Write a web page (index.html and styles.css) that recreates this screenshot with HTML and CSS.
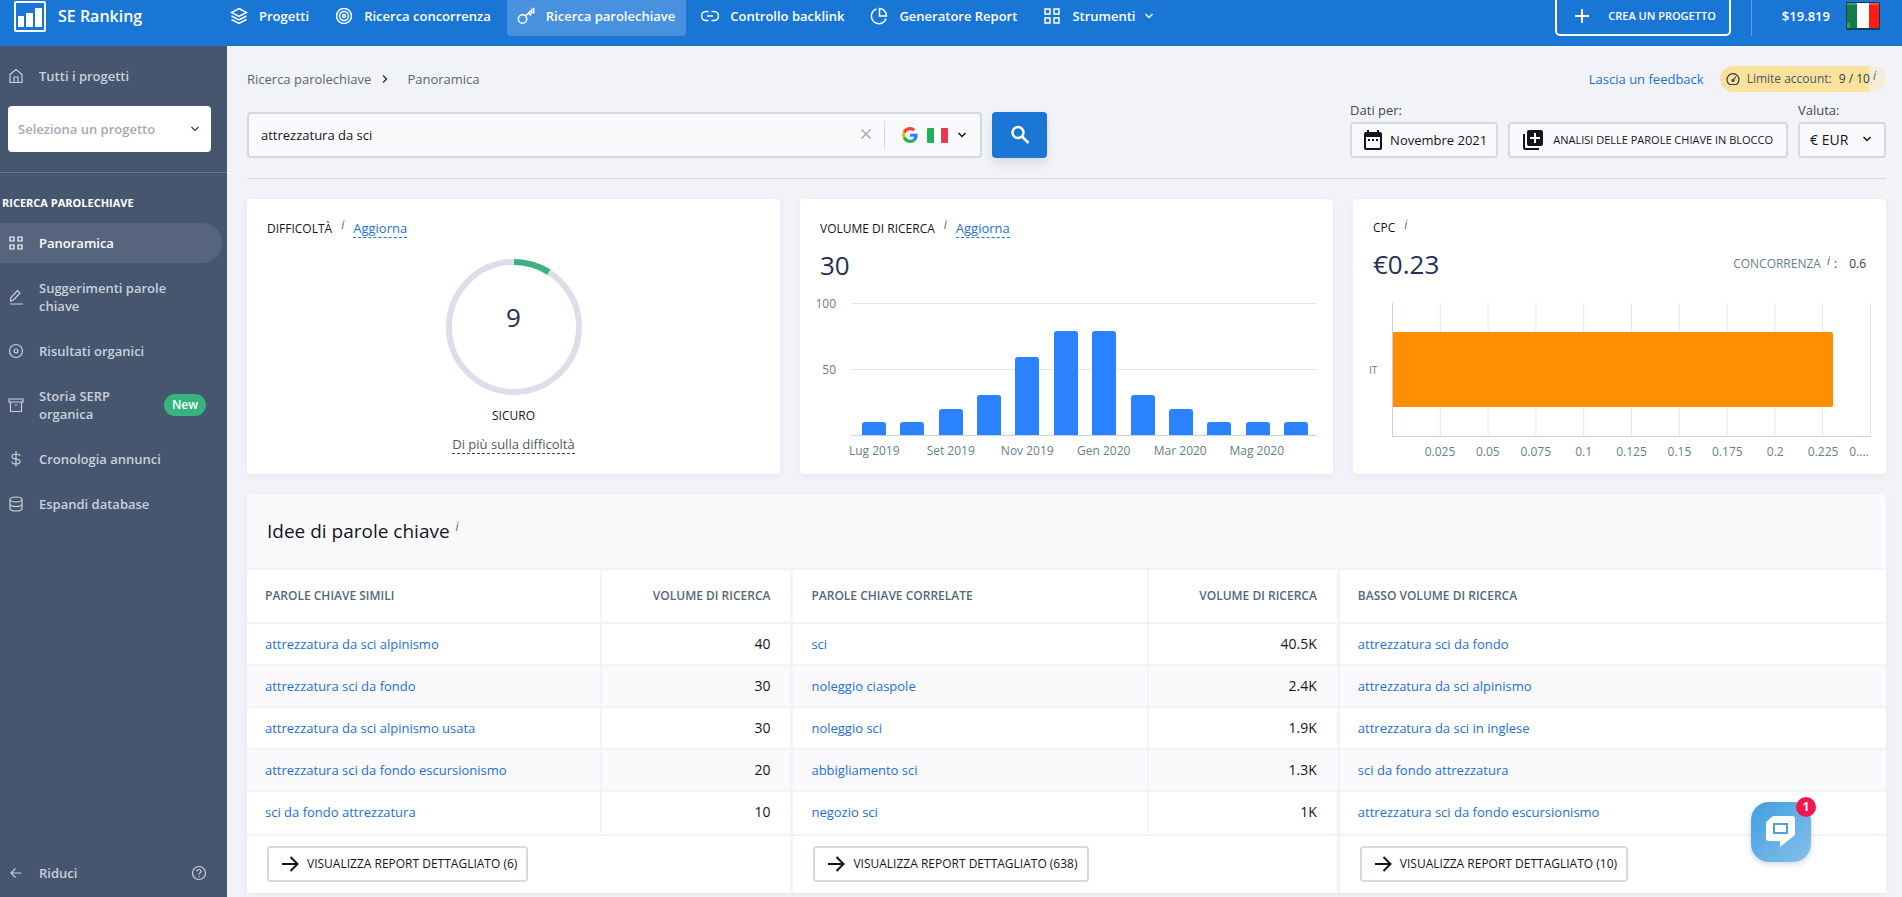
FILE: index.html
```
<!DOCTYPE html>
<html lang="it">
<head>
  <meta charset="utf-8">
  <title>SE Ranking - Panoramica</title>
  <link rel="stylesheet" href="styles.css">
</head>
<body>
  <header class="header">
    <a class="logo" href="#">
      <svg class="logo__icon" width="32" height="31" viewBox="0 0 32 31">
        <rect x="1" y="1" width="30" height="29" rx="1" fill="none" stroke="#fff" stroke-width="2"/>
        <path d="M4 15h6v11H4zM12 12h7v14h-7zM21 7h7v19h-7z" fill="#fff"/>
      </svg>
      SE Ranking
    </a>

    <nav class="menu">
      <a class="menu__item" href="#">
        <svg class="icon" width="18" height="18" viewBox="0 0 18 18"><path d="M9 1.500L16.500 5.500 9 9.500 1.500 5.500zM1.500 9L9 13l7.500-4M1.500 12.500L9 16.500l7.500-4"/></svg>
        Progetti
      </a>
      <a class="menu__item" href="#">
        <svg class="icon" width="18" height="18" viewBox="0 0 18 18"><circle cx="9" cy="9" r="7.500"/><circle cx="9" cy="9" r="4.500"/><circle cx="9" cy="9" r="1.500"/></svg>
        Ricerca concorrenza
      </a>
      <a class="menu__item menu__item--active" href="#">
        <svg class="icon" width="18" height="18" viewBox="0 0 18 18"><circle cx="5.500" cy="12" r="4.200"/><path d="M8.500 9L15.500 2M11.500 6.200l1.800 1.800 1.500-3.200 1.900 1V1.500h-1"/></svg>
        Ricerca parolechiave
      </a>
      <a class="menu__item" href="#">
        <svg class="icon" width="18" height="18" viewBox="0 0 18 18"><path d="M7.500 4.500H5a4.500 4.500 0 0 0 0 9h2.500M10.500 4.500H13a4.500 4.500 0 0 1 0 9h-2.500M6 9h6"/></svg>
        Controllo backlink
      </a>
      <a class="menu__item" href="#">
        <svg class="icon" width="18" height="18" viewBox="0 0 18 18"><path d="M6.500 2A7.500 7.500 0 1 0 16 11.500M9.500 1.500v7.500h7A7.500 7.500 0 0 0 9.500 1.500z"/></svg>
        Generatore Report
      </a>
      <a class="menu__item" href="#">
        <svg class="icon" width="18" height="18" viewBox="0 0 18 18"><path d="M2 2h5v5H2zM11 2h5v5h-5zM2 11h5v5H2zM11 11h5v5h-5z"/></svg>
        Strumenti
        <svg class="icon menu__arrow" width="10" height="10" viewBox="0 0 10 10"><path d="M1.500 3L5 6.500 8.500 3"/></svg>
      </a>
    </nav>

    <button class="create" type="button">
      <svg class="icon" width="16" height="16" viewBox="0 0 16 16"><path d="M8 1v14M1 8h14"/></svg>
      CREA UN PROGETTO
    </button>
    <div class="balance">$19.819</div>
    <a class="lang" href="#" aria-label="Italiano">
      <svg width="34" height="28" viewBox="0 0 34 28">
        <rect width="34" height="28" rx="1" fill="#0c3f55"/>
        <path d="M1 1h11v25H1z" fill="#128046"/>
        <path d="M11 1h12v25H11z" fill="#fff"/>
        <path d="M23 1h10v25H23z" fill="#ff1c16"/>
        <path d="M1 1h10v2H1zM23 1h10v2H23zM1 21h3v5H1z" fill="#fff" opacity=".2"/>
      </svg>
    </a>
  </header>

  <div class="layout">
    <aside class="sidebar">
      <a class="side-link" href="#">
        <svg class="icon" width="16" height="16" viewBox="0 0 16 16"><path d="M2 6.500L8 1.500l6 5v8H2zM6 14.500V9h4v5.500"/></svg>
        Tutti i progetti
      </a>
      <div class="project">
        <select class="project__select" aria-label="Progetto">
          <option>Seleziona un progetto</option>
        </select>
        <svg class="icon project__arrow" width="10" height="10" viewBox="0 0 10 10"><path d="M1.500 3L5 6.500 8.500 3"/></svg>
      </div>

      <h2 class="sidebar__title">RICERCA PAROLECHIAVE</h2>
      <nav class="side-menu">
        <a class="side-link side-link--active" href="#">
          <svg class="icon" width="16" height="16" viewBox="0 0 16 16"><path d="M2 2h4v4H2zM10 2h4v4h-4zM2 10h4v4H2zM10 10h4v4h-4z"/></svg>
          Panoramica
        </a>
        <a class="side-link" href="#">
          <svg class="icon" width="16" height="16" viewBox="0 0 16 16"><path d="M2 15h13M3 8.500L9.500 1.500l2.500 2.500-6.500 7L2.500 12z"/></svg>
          <span>Suggerimenti parole<br>chiave</span>
        </a>
        <a class="side-link" href="#">
          <svg class="icon" width="16" height="16" viewBox="0 0 16 16"><circle cx="8" cy="8" r="6.500"/><circle cx="8" cy="8" r="2"/></svg>
          Risultati organici
        </a>
        <a class="side-link" href="#">
          <svg class="icon" width="16" height="16" viewBox="0 0 16 16"><path d="M1 2h14v3H1zM2.500 5v9.500h11V5M6.500 8h3"/></svg>
          <span>Storia SERP<br>organica</span>
          <span class="new">New</span>
        </a>
        <a class="side-link" href="#">
          <svg class="icon" width="16" height="16" viewBox="0 0 16 16"><path d="M8 0.500v15M12 5c0-1.500-1.500-2-4-2s-4 .5-4 2.500S5.500 8 8 8s4 .8 4 2.500-1.500 2.500-4 2.500-4-.7-4-2.500"/></svg>
          Cronologia annunci
        </a>
        <a class="side-link" href="#">
          <svg class="icon" width="16" height="16" viewBox="0 0 16 16"><ellipse cx="8" cy="3.500" rx="6" ry="2.500"/><path d="M2 3.500v9c0 1.400 2.700 2.500 6 2.500s6-1.100 6-2.500v-9M2 8c0 1.400 2.700 2.500 6 2.500s6-1.100 6-2.500"/></svg>
          Espandi database
        </a>
      </nav>

      <div class="sidebar__bottom">
        <a class="side-link" href="#">
          <svg class="icon" width="16" height="16" viewBox="0 0 16 16"><path d="M13 8H3M7.500 3.500L3 8l4.500 4.500"/></svg>
          Riduci
        </a>
        <a class="help" href="#" aria-label="Aiuto">
          <svg class="icon" width="16" height="16" viewBox="0 0 16 16"><circle cx="8" cy="8" r="6.500"/><path d="M6 6.500c0-2.700 4-2.700 4 0C10 8 8 8 8 9.500M8 11v1.200"/></svg>
        </a>
      </div>
    </aside>

    <main class="main">
      <div class="topline">
        <a class="topline__crumb" href="#">Ricerca parolechiave</a>
        <svg class="icon topline__arrow" width="8" height="10" viewBox="0 0 8 10"><path d="M2 1.500L5.500 5 2 8.500"/></svg>
        <span class="topline__crumb">Panoramica</span>
        <a class="topline__feedback" href="#">Lascia un feedback</a>
        <div class="limit">
          <svg class="icon" width="14" height="14" viewBox="0 0 14 14"><path d="M3.500 12.500a6 6 0 1 1 7 0zM7 8.500l3-4"/><circle cx="7" cy="8.500" r="1"/></svg>
          Limite account:
          <b class="limit__value">9 / 10</b>
          <i class="info">i</i>
        </div>
      </div>

      <form class="search">
        <div class="search__box">
          <input class="search__input" type="text" value="attrezzatura da sci" aria-label="Parola chiave">
          <button class="search__clear" type="reset" aria-label="Cancella">
            <svg class="icon" width="12" height="12" viewBox="0 0 12 12"><path d="M1.500 1.500l9 9M10.500 1.500l-9 9"/></svg>
          </button>
          <button class="search__engine" type="button" aria-label="Google Italia">
            <svg width="16" height="16" viewBox="0 0 48 48">
              <path fill="#ff4131" d="M24 9.500c3.500 0 6.700 1.200 9.200 3.600l6.900-6.900C35.900 2.400 30.500 0 24 0 14.600 0 6.500 5.400 2.600 13.200l8 6.200C12.400 13.700 17.700 9.500 24 9.500z"/>
              <path fill="#2d7ff9" d="M47 24.600c0-1.600-.2-3.100-.4-4.600H24v9h12.900c-.6 3-2.300 5.500-4.800 7.200l7.700 6C44.400 38 47 31.900 47 24.600z"/>
              <path fill="#fbb90c" d="M10.500 28.600a14.500 14.500 0 0 1 0-9.200l-8-6.200a24 24 0 0 0 0 21.600z"/>
              <path fill="#1eb158" d="M24 48c6.500 0 11.900-2.100 15.900-5.800l-7.700-6c-2.200 1.500-4.900 2.300-8.200 2.300-6.300 0-11.600-4.200-13.500-9.900l-8 6.200C6.500 42.600 14.600 48 24 48z"/>
            </svg>
            <svg width="21" height="15" viewBox="0 0 21 15"><rect width="21" height="15" rx="1" fill="#fff"/><path d="M1 0h6v15H1a1 1 0 0 1-1-1V1a1 1 0 0 1 1-1z" fill="#1eb158"/><path d="M14 0h6a1 1 0 0 1 1 1v13a1 1 0 0 1-1 1h-6z" fill="#e9374b"/></svg>
            <svg class="icon" width="10" height="10" viewBox="0 0 10 10"><path d="M1.500 3L5 6.500 8.500 3"/></svg>
          </button>
        </div>
        <button class="search__submit" type="submit" aria-label="Cerca">
          <svg class="icon" width="20" height="20" viewBox="0 0 20 20"><circle cx="8" cy="7.500" r="5.500"/><path d="M12 11.500l6.500 6.500"/></svg>
        </button>

        <div class="filters">
          <div class="field">
            <span class="field__label">Dati per:</span>
            <button class="button button--date" type="button">
              <svg width="18" height="20" viewBox="0 0 18 20"><path d="M2 2h1V0h2v2h8V0h2v2h1a2 2 0 0 1 2 2v14a2 2 0 0 1-2 2H2a2 2 0 0 1-2-2V4a2 2 0 0 1 2-2zM2 7v11h14V7z" fill="#14141f" fill-rule="evenodd"/><path d="M4 9h2v2H4zM8 9h2v2H8zM12 9h2v2h-2z" fill="#14141f"/></svg>
              Novembre 2021
            </button>
          </div>
          <button class="button button--bulk" type="button">
            <svg width="20" height="20" viewBox="0 0 20 20"><path d="M6 0h12a2 2 0 0 1 2 2v12a2 2 0 0 1-2 2H6a2 2 0 0 1-2-2V2a2 2 0 0 1 2-2zM0 4h2v14h14v2H2a2 2 0 0 1-2-2z" fill="#14141f"/><path d="M11 3h2v4h4v2h-4v4h-2V9H7V7h4z" fill="#fff"/></svg>
            ANALISI DELLE PAROLE CHIAVE IN BLOCCO
          </button>
          <div class="field">
            <label class="field__label" for="currency">Valuta:</label>
            <div class="currency">
              <select class="currency__select" id="currency">
                <option>€ EUR</option>
              </select>
              <svg class="icon currency__arrow" width="10" height="10" viewBox="0 0 10 10"><path d="M1.500 3L5 6.500 8.500 3"/></svg>
            </div>
          </div>
        </div>
      </form>

      <section class="cards">
        <article class="card">
          <div class="card__head">
            <h3 class="card__title">DIFFICOLTÀ</h3>
            <i class="info">i</i>
            <a class="card__update" href="#">Aggiorna</a>
          </div>
          <div class="difficulty">
            <div class="gauge">
              <svg class="gauge__ring" width="136" height="136" viewBox="0 0 136 136">
                <circle cx="68" cy="68" r="65" stroke="#dcdee8"/>
                <circle cx="68" cy="68" r="65" stroke="#3bb27d" pathLength="100" stroke-dasharray="9 91" transform="rotate(-90 68 68)"/>
              </svg>
              <strong class="gauge__value">9</strong>
            </div>
            <span class="difficulty__level">SICURO</span>
            <a class="difficulty__more" href="#">Di più sulla difficoltà</a>
          </div>
        </article>

        <article class="card">
          <div class="card__head">
            <h3 class="card__title">VOLUME DI RICERCA</h3>
            <i class="info">i</i>
            <a class="card__update" href="#">Aggiorna</a>
          </div>
          <div class="card__row">
            <strong class="card__number">30</strong>
          </div>
          <div class="volume">
            <div class="volume__scale">
              <span>100</span>
              <span>50</span>
            </div>
            <div class="volume__plot">
              <div class="volume__bar" style="height: 10%"></div>
              <div class="volume__bar" style="height: 10%"></div>
              <div class="volume__bar" style="height: 20%"></div>
              <div class="volume__bar" style="height: 30%"></div>
              <div class="volume__bar" style="height: 59%"></div>
              <div class="volume__bar" style="height: 79%"></div>
              <div class="volume__bar" style="height: 79%"></div>
              <div class="volume__bar" style="height: 30%"></div>
              <div class="volume__bar" style="height: 20%"></div>
              <div class="volume__bar" style="height: 10%"></div>
              <div class="volume__bar" style="height: 10%"></div>
              <div class="volume__bar" style="height: 10%"></div>
            </div>
            <div class="volume__months">
              <span>Lug 2019</span>
              <span>Set 2019</span>
              <span>Nov 2019</span>
              <span>Gen 2020</span>
              <span>Mar 2020</span>
              <span>Mag 2020</span>
            </div>
          </div>
        </article>

        <article class="card">
          <div class="card__head">
            <h3 class="card__title">CPC</h3>
            <i class="info">i</i>
          </div>
          <div class="card__row">
            <strong class="card__number">€0.23</strong>
            <div class="competition">CONCORRENZA <i class="info">i</i><b class="competition__colon">:</b><b>0.6</b></div>
          </div>
          <div class="cpc">
            <span class="cpc__country">IT</span>
            <div class="cpc__plot">
              <div class="cpc__bar" style="width: 92%"></div>
            </div>
            <div class="cpc__scale">
              <span>0.025</span>
              <span>0.05</span>
              <span>0.075</span>
              <span>0.1</span>
              <span>0.125</span>
              <span>0.15</span>
              <span>0.175</span>
              <span>0.2</span>
              <span>0.225</span>
              <span>0....</span>
            </div>
          </div>
        </article>
      </section>

      <section class="ideas">
        <h2 class="ideas__title">Idee di parole chiave <i class="info">i</i></h2>
        <div class="ideas__columns">
          <div class="ideas__column">
            <table class="table">
              <thead>
                <tr><th>PAROLE CHIAVE SIMILI</th><th class="table__volume">VOLUME DI RICERCA</th></tr>
              </thead>
              <tbody>
                <tr><td><a href="#">attrezzatura da sci alpinismo</a></td><td class="table__volume">40</td></tr>
                <tr><td><a href="#">attrezzatura sci da fondo</a></td><td class="table__volume">30</td></tr>
                <tr><td><a href="#">attrezzatura da sci alpinismo usata</a></td><td class="table__volume">30</td></tr>
                <tr><td><a href="#">attrezzatura sci da fondo escursionismo</a></td><td class="table__volume">20</td></tr>
                <tr><td><a href="#">sci da fondo attrezzatura</a></td><td class="table__volume">10</td></tr>
              </tbody>
            </table>
            <div class="ideas__footer">
              <button class="button button--report" type="button">
                <svg class="icon" width="18" height="18" viewBox="0 0 18 18"><path d="M1 9h15M9.500 2L16.500 9l-7 7"/></svg>
                VISUALIZZA REPORT DETTAGLIATO (6)
              </button>
            </div>
          </div>

          <div class="ideas__column">
            <table class="table">
              <thead>
                <tr><th>PAROLE CHIAVE CORRELATE</th><th class="table__volume">VOLUME DI RICERCA</th></tr>
              </thead>
              <tbody>
                <tr><td><a href="#">sci</a></td><td class="table__volume">40.5K</td></tr>
                <tr><td><a href="#">noleggio ciaspole</a></td><td class="table__volume">2.4K</td></tr>
                <tr><td><a href="#">noleggio sci</a></td><td class="table__volume">1.9K</td></tr>
                <tr><td><a href="#">abbigliamento sci</a></td><td class="table__volume">1.3K</td></tr>
                <tr><td><a href="#">negozio sci</a></td><td class="table__volume">1K</td></tr>
              </tbody>
            </table>
            <div class="ideas__footer">
              <button class="button button--report" type="button">
                <svg class="icon" width="18" height="18" viewBox="0 0 18 18"><path d="M1 9h15M9.500 2L16.500 9l-7 7"/></svg>
                VISUALIZZA REPORT DETTAGLIATO (638)
              </button>
            </div>
          </div>

          <div class="ideas__column">
            <table class="table">
              <thead>
                <tr><th>BASSO VOLUME DI RICERCA</th></tr>
              </thead>
              <tbody>
                <tr><td><a href="#">attrezzatura sci da fondo</a></td></tr>
                <tr><td><a href="#">attrezzatura da sci alpinismo</a></td></tr>
                <tr><td><a href="#">attrezzatura da sci in inglese</a></td></tr>
                <tr><td><a href="#">sci da fondo attrezzatura</a></td></tr>
                <tr><td><a href="#">attrezzatura sci da fondo escursionismo</a></td></tr>
              </tbody>
            </table>
            <div class="ideas__footer">
              <button class="button button--report" type="button">
                <svg class="icon" width="18" height="18" viewBox="0 0 18 18"><path d="M1 9h15M9.500 2L16.500 9l-7 7"/></svg>
                VISUALIZZA REPORT DETTAGLIATO (10)
              </button>
            </div>
          </div>
        </div>
      </section>
    </main>
  </div>

  <button class="chat" type="button" aria-label="Chat">
    <svg width="30" height="32" viewBox="0 0 30 32">
      <path d="M7 0h19a3 3 0 0 1 3 3v16L14 31v-6H3a3 3 0 0 1-3-3V6z" fill="#fff"/>
      <path d="M8 8h13v9H8z" fill="#fff" stroke="#4f9fd8" stroke-width="2"/>
    </svg>
    <span class="chat__badge">1</span>
  </button>
</body>
</html>
```
FILE: styles.css
```
* {
  box-sizing: border-box;
}

body {
  display: flex;
  flex-direction: column;
  min-height: 100vh;
  margin: 0;
  background-color: #f2f3f8;
  color: #14141f;
  font-family: "Open Sans", "Noto Sans", sans-serif;
  font-size: 13px;
  line-height: 18px;
}

a {
  color: #1d6fd6;
  text-decoration: none;
}

button,
input,
select {
  margin: 0;
  font: inherit;
  color: inherit;
}

button {
  cursor: pointer;
}

select {
  appearance: none;
}

.icon {
  flex: none;
  fill: none;
  stroke: currentColor;
  stroke-width: 1.5;
}

.info {
  align-self: flex-start;
  color: #4d6a7a;
  font-size: 12px;
  line-height: 12px;
}

/* header */

.header {
  display: flex;
  flex: none;
  align-items: center;
  height: 46px;
  padding: 0 22px 14px 14px;
  background-color: #1976d5;
  color: #fff;
}

.logo {
  display: flex;
  gap: 12px;
  align-items: center;
  width: 206px;
  color: #fff;
  font-size: 16px;
  font-weight: 600;
}

.menu {
  display: flex;
  flex: 1;
  gap: 5px;
}

.menu__item {
  display: flex;
  gap: 11px;
  align-items: center;
  height: 40px;
  padding: 0 11px 0 10px;
  border-radius: 4px;
  color: #fff;
  font-weight: 600;
}

.menu__item--active {
  background-color: #4791de;
}

.menu__arrow {
  margin-left: -2px;
}

.create {
  display: flex;
  gap: 18px;
  align-items: center;
  height: 40px;
  margin-right: 20px;
  padding: 0 13px 0 17px;
  border: 2px solid #fff;
  border-radius: 5px;
  background: none;
  font-size: 11px;
  font-weight: 600;
}

.create .icon,
.button--report .icon {
  stroke-width: 2;
}

.balance {
  height: 40px;
  padding: 0 16px 0 30px;
  border-left: 1px solid #5b9fe3;
  font-weight: 600;
  line-height: 40px;
}

.lang {
  display: flex;
}

/* sidebar */

.layout {
  display: flex;
  flex: 1;
}

.sidebar {
  display: flex;
  flex: none;
  flex-direction: column;
  width: 227px;
  padding: 10px 0 4px;
  background-color: #46566f;
}

.side-link {
  display: flex;
  gap: 15px;
  align-items: center;
  margin-right: 5px;
  padding: 11px 16px 11px 8px;
  border-radius: 0 20px 20px 0;
  color: #c9d0da;
  font-weight: 600;
}

.side-link--active {
  background-color: #56657d;
  color: #fff;
}

.sidebar .icon {
  stroke-width: 1.2;
}

.new {
  margin-left: auto;
  padding: 2px 8px;
  border-radius: 11px;
  background-color: #36b37e;
  color: #fff;
  font-size: 12px;
}

.project {
  position: relative;
  padding: 10px 16px 20px 8px;
  border-bottom: 1px solid #65748b;
}

.project__select {
  width: 100%;
  height: 46px;
  padding: 0 10px;
  border: 0;
  border-radius: 4px;
  background-color: #fff;
  color: #a3a9b8;
  font-weight: 600;
}

.project__arrow {
  position: absolute;
  top: 28px;
  right: 27px;
  color: #333a4d;
}

.sidebar__title {
  margin: 21px 0 11px 2px;
  color: #fff;
  font-size: 11px;
  font-weight: 700;
}

.side-menu {
  display: flex;
  flex-direction: column;
  gap: 5px;
}

.sidebar__bottom {
  display: flex;
  align-items: center;
  justify-content: space-between;
  margin-top: auto;
}

.help {
  display: flex;
  margin-right: 20px;
  color: #c9d0da;
}

/* main */

.main {
  flex: 1;
  min-width: 0;
  padding: 20px 16px 4px 20px;
}

.topline {
  display: flex;
  align-items: center;
}

.topline__crumb {
  color: #566776;
}

.topline__arrow {
  margin: 0 18px 0 10px;
  color: #333a4d;
}

.topline__feedback {
  margin: 0 16px 0 auto;
}

.limit {
  display: flex;
  gap: 7px;
  align-items: center;
  height: 26px;
  padding: 4px 10px 4px 6px;
  border-radius: 13px;
  background: linear-gradient(to right, #fae29d 90%, #f6ecd8 90%);
  color: #4f5663;
  font-size: 12px;
}

.limit .icon {
  color: #333a4d;
  stroke-width: 1.2;
}

.limit__value {
  color: #333a4d;
  font-weight: 500;
}

.limit .info {
  margin-left: -4px;
}

.search {
  display: flex;
  gap: 10px;
  align-items: flex-end;
  margin-bottom: 20px;
  padding: 9px 0 20px;
  border-bottom: 1px solid #d5d7e4;
}

.search__box {
  display: flex;
  width: 735px;
  height: 46px;
  border: 2px solid #d5d7e4;
  border-radius: 4px;
  background-color: #fafafd;
}

.search__input {
  flex: 1;
  min-width: 0;
  padding: 0 12px;
  border: 0;
  background: none;
}

.search__clear {
  padding: 0 8px;
  border: 0;
  background: none;
  color: #a3a9b8;
}

.search__engine {
  display: flex;
  gap: 9px;
  align-items: center;
  margin: 7px 4px;
  padding: 0 9px 0 17px;
  border: 0;
  border-left: 1px solid #d5d7e4;
  background: none;
}

.search__submit {
  display: flex;
  align-items: center;
  justify-content: center;
  width: 55px;
  height: 46px;
  border: 0;
  border-radius: 4px;
  background-color: #1976d5;
  box-shadow: 0 5px 10px #d9dbe3;
  color: #fff;
}

.search__submit .icon {
  stroke-width: 2.5;
}

.filters {
  display: flex;
  gap: 10px;
  align-items: flex-end;
  margin-left: auto;
}

.field {
  display: flex;
  flex-direction: column;
  gap: 3px;
}

.field__label {
  color: #3d4a57;
}

.button {
  display: flex;
  gap: 8px;
  align-items: center;
  height: 36px;
  padding: 0 9px 0 12px;
  border: 2px solid #d5d7e4;
  border-radius: 4px;
  background-color: #fafafd;
  font-weight: 500;
}

.button--report {
  background-color: #fff;
  font-size: 12px;
}

.button--bulk {
  gap: 10px;
  padding: 0 13px;
  font-size: 11px;
}

.currency {
  position: relative;
}

.currency__select {
  width: 88px;
  height: 36px;
  padding: 0 10px;
  border: 2px solid #d5d7e4;
  border-radius: 4px;
  background-color: #fafafd;
  font-size: 14px;
  font-weight: 500;
}

.currency__arrow {
  position: absolute;
  top: 12px;
  right: 14px;
}

/* cards */

.cards {
  display: grid;
  grid-template-columns: repeat(3, minmax(0, 1fr));
  gap: 20px;
  margin-bottom: 20px;
}

.card {
  height: 275px;
  padding: 20px;
  border-radius: 4px;
  background-color: #fff;
  box-shadow: 0 2px 6px #e6e8ef;
}

.card__head {
  display: flex;
  gap: 9px;
  align-items: center;
}

.card__title {
  margin: 0;
  font-size: 12px;
  font-weight: 400;
}

.card__update {
  border-bottom: 1px dashed #1976d5;
}

.card__row {
  display: flex;
  align-items: center;
  justify-content: space-between;
  height: 54px;
}

.card__number {
  color: #252f5a;
  font-size: 26px;
  font-weight: 500;
}

.difficulty {
  display: flex;
  flex-direction: column;
  align-items: center;
  padding-top: 21px;
}

.gauge {
  display: grid;
}

.gauge__ring {
  grid-area: 1 / 1;
  fill: none;
  stroke-width: 6;
}

.gauge__value {
  grid-area: 1 / 1;
  padding-top: 49px;
  color: #252f5a;
  font-size: 26px;
  font-weight: 500;
  text-align: center;
}

.difficulty__level {
  margin: 12px 0 10px;
  font-size: 12px;
}

.difficulty__more {
  border-bottom: 1px dashed #3d4a57;
  color: #4d5a66;
}

.volume {
  display: grid;
  grid-template-columns: 16px 1fr;
  column-gap: 15px;
  margin: 11px -4px 0 0;
  color: #66808c;
  font-size: 12px;
}

.volume__scale {
  display: flex;
  flex-direction: column;
  gap: 48px;
  align-items: flex-end;
  height: 133px;
  margin-top: -8px;
}

.volume__plot {
  display: flex;
  align-items: flex-end;
  justify-content: space-between;
  height: 133px;
  padding: 0 9px 0 11px;
  border-bottom: 1px solid #c5d2e8;
  background: linear-gradient(#e6e6e6 1px, transparent 1px) 0 0 / 100% 66px;
}

.volume__bar {
  width: 24px;
  border-radius: 3px 3px 0 0;
  background-color: #2a82ff;
}

.volume__months {
  display: grid;
  grid-column: 2;
  grid-template-columns: repeat(6, 1fr);
  margin: 6px 22px 0 -15px;
  text-align: center;
}

.cpc {
  display: grid;
  grid-template-columns: 8px 1fr;
  column-gap: 15px;
  align-items: center;
  margin: 12px -5px 0 -4px;
  color: #66808c;
  font-size: 12px;
}

.cpc__country {
  font-size: 10px;
}

.cpc__plot {
  display: flex;
  align-items: center;
  height: 134px;
  border: solid #c9cfe2;
  border-width: 0 0 1px 1px;
  background: linear-gradient(to left, #e6e6e6 1px, transparent 1px) 0 0 / 10% 100%;
}

.cpc__bar {
  height: 75px;
  border-radius: 0 2px 2px 0;
  background-color: #ff8f00;
}

.cpc__scale {
  display: grid;
  grid-column: 2;
  grid-template-columns: repeat(9, 2fr) 1fr;
  margin: 6px 0 0 24px;
  text-align: center;
}

.competition {
  display: flex;
  gap: 6px;
  color: #66808c;
  font-size: 12px;
}

.competition b {
  color: #333a4d;
  font-weight: 500;
}

.competition .competition__colon {
  margin: 0 6px 0 -2px;
}

/* keyword ideas */

.ideas {
  border-radius: 4px;
  background-color: #fafafd;
  box-shadow: 0 2px 6px #e6e8ef;
}

.ideas__title {
  display: flex;
  gap: 6px;
  margin: 0;
  padding: 27px 20px;
  border-bottom: 2px solid #f2f3f8;
  font-size: 19px;
  font-weight: 400;
  line-height: 20px;
}

.ideas__columns {
  display: grid;
  grid-template-columns: 199fr 199fr 200fr;
  gap: 3px;
  background-color: #f2f3f8;
}

.ideas__column {
  background-color: #fff;
}

.table {
  width: 100%;
  border-spacing: 0;
}

.table th,
.table td {
  padding: 0 18px;
  border-bottom: 2px solid #f2f3f8;
  text-align: left;
}

.table th {
  height: 54px;
  color: #566776;
  font-size: 12px;
  font-weight: 600;
}

.table td {
  height: 42px;
}

.table .table__volume {
  width: 35%;
  padding-right: 20px;
  border-left: 2px solid #f2f3f8;
  text-align: right;
}

.table td.table__volume {
  font-size: 14px;
}

.table tbody tr:nth-child(even) {
  background-color: #fafafd;
}

.table tbody tr:last-child td {
  border-bottom-color: #fff;
}

.ideas__footer {
  padding: 10px 20px 11px;
  border-top: 2px solid #f2f3f8;
}

/* chat */

.chat {
  position: fixed;
  right: 91px;
  bottom: 35px;
  display: flex;
  align-items: center;
  justify-content: center;
  width: 60px;
  height: 60px;
  border: 0;
  border-radius: 18px;
  background: linear-gradient(135deg, #409fe0, #86c0ea);
  box-shadow: 0 2px 6px #d0d6e0;
}

.chat__badge {
  position: absolute;
  top: -5px;
  right: -5px;
  width: 20px;
  height: 20px;
  border-radius: 50%;
  background-color: #f2164e;
  color: #fff;
  font-size: 12px;
  font-weight: 700;
  line-height: 20px;
}
```
